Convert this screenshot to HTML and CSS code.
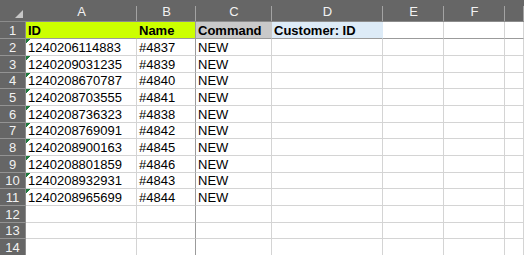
FILE: index.html
```html
<!DOCTYPE html>
<html lang="en">
<head>
    <meta charset="UTF-8">
    <title>Orders sheet</title>
    <link rel="stylesheet" href="styles.css">
</head>
<body>

    <div class="sheet" id="sheet"></div>

    <script>
        // G is scrolled mostly out of view, its letter isn't shown
        var columns = ['A', 'B', 'C', 'D', 'E', 'F', ''];

        var titles = [
            { text: 'ID', fill: 'lime' },
            { text: 'Name', fill: 'lime' },
            { text: 'Command', fill: 'grey' },
            { text: 'Customer: ID', fill: 'blue' }
        ];

        var orders = [
            ['1240206114883', '#4837', 'NEW'],
            ['1240209031235', '#4839', 'NEW'],
            ['1240208670787', '#4840', 'NEW'],
            ['1240208703555', '#4841', 'NEW'],
            ['1240208736323', '#4838', 'NEW'],
            ['1240208769091', '#4842', 'NEW'],
            ['1240208900163', '#4845', 'NEW'],
            ['1240208801859', '#4846', 'NEW'],
            ['1240208932931', '#4843', 'NEW'],
            ['1240208965699', '#4844', 'NEW']
        ];

        var sheet = document.getElementById('sheet');

        function addCell(className, text) {
            var cell = document.createElement('div');
            cell.className = className;
            cell.textContent = text || '';
            sheet.appendChild(cell);
            return cell;
        }

        // top-left corner with the select-all triangle
        var corner = addCell('corner');
        corner.innerHTML = '<svg width="8" height="8" viewBox="0 0 8 8"><polygon points="8,0 8,8 0,8" fill="#c6c6c6"/></svg>';

        for (var c = 0; c < columns.length; c++) {
            addCell('colhead', columns[c]);
        }

        for (var r = 1; r <= 14; r++) {
            addCell('rowhead', r);

            for (var c = 0; c < columns.length; c++) {
                var cls = 'cell';
                var text = '';

                if (c === 1) cls += ' freeze-col';
                if (r === 1) cls += ' freeze-row';

                if (r === 1 && titles[c]) {
                    cls += ' title ' + titles[c].fill;
                    text = titles[c].text;
                } else if (r >= 2 && orders[r - 2] && c < 3) {
                    text = orders[r - 2][c];
                    if (c === 0) cls += ' as-text';
                }

                addCell(cls, text);
            }
        }
    </script>

</body>
</html>
```

FILE: styles.css
```css
body {
    margin: 0;
    padding: 0;
    background: #fff;
    overflow: hidden;
    font-family: 'Liberation Sans', Arial, sans-serif;
}

.sheet {
    display: grid;
    grid-template-columns: 26px 111px 59px 76px 111px 61px 61px minmax(0, 1fr);
    grid-template-rows: 22px 17px 17px 17px 16px 17px 17px 16px 17px 17px 16px 17px 17px 16px 17px;
    font-size: 13px;
}

.corner {
    display: flex;
    align-items: flex-end;
    justify-content: flex-end;
    padding: 0 3px 3px 0;
    background: #666;
    border-bottom: 1px solid #8c8c8c;
    box-sizing: border-box;
}

.corner svg {
    display: block;
}

.colhead {
    display: flex;
    align-items: center;
    justify-content: center;
    padding-top: 2px;
    background: linear-gradient(#a3a3a3, #a3a3a3) right bottom / 1px 15px no-repeat, #666;
    border-bottom: 1px solid #8c8c8c;
    color: #f2f2f2;
    box-sizing: border-box;
}

.rowhead {
    display: flex;
    align-items: flex-end;
    justify-content: center;
    background: #666;
    border-bottom: 1px solid #939393;
    border-right: 1px solid #8c8c8c;
    color: #f2f2f2;
    box-sizing: border-box;
}

.cell {
    display: flex;
    align-items: flex-end;
    padding: 0 2px;
    border-right: 1px solid #d4d4d4;
    border-bottom: 1px solid #d4d4d4;
    color: #000;
    white-space: nowrap;
    overflow: hidden;
    box-sizing: border-box;
}

/* number stored as text marker */
.as-text {
    background: linear-gradient(135deg, #1f7a3c 0 3px, transparent 3px) left top / 6px 6px no-repeat;
}

.title {
    font-weight: bold;
}

.lime {
    background: #ccff00;
    border-right-color: #ccff00;
}

.grey {
    background: #c9c9c9;
    border-right-color: #c9c9c9;
}

.blue {
    background: #ddebf7;
    border-right-color: #ddebf7;
}

.freeze-col {
    border-right-color: #9b9b9b;
}

.freeze-row {
    border-bottom-color: #9b9b9b;
}
```
